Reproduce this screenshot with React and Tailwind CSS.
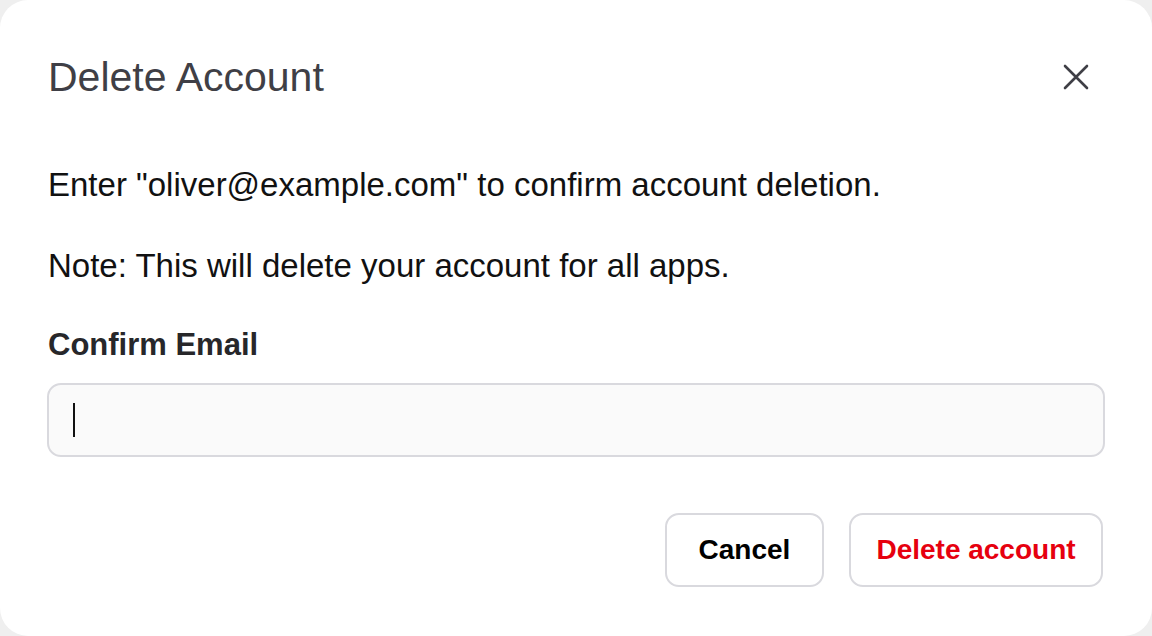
export default function App() {
  return (
    <div className="w-[1152px] h-[636px] bg-[#efefef] overflow-hidden" style={{ fontFamily: '"Liberation Sans", Arial, sans-serif' }}>
      <div className="w-full h-full bg-white rounded-[28px] flex flex-col pl-[47px] pr-[47px] pt-[53px]">
        <div className="flex items-center justify-between h-[48px]">
          <h1 className="pl-[1px] text-[41px] leading-none text-[#3f3f46]">Delete Account</h1>
          <button className="w-[48px] h-[48px] flex items-center justify-center mr-[5px] text-[#3f3f46]" aria-label="Close">
            <svg width="26" height="26" viewBox="0 0 26 26" fill="none" stroke="currentColor" strokeWidth="2.6" strokeLinecap="round">
              <path d="M2 2L24 24M24 2L2 24" />
            </svg>
          </button>
        </div>
        <p className="mt-[65px] pl-[1px] text-[33px] leading-[38px] text-[#111111]">Enter "oliver@example.com" to confirm account deletion.</p>
        <p className="mt-[43px] pl-[1px] text-[33px] leading-[38px] text-[#111111]">Note: This will delete your account for all apps.</p>
        <label className="mt-[41px] pl-[1px] text-[31px] leading-[38px] font-bold text-[#27272a]">Confirm Email</label>
        <div className="mt-[19px] h-[74px] rounded-[14px] border-2 border-[#d9d9de] bg-[#fafafa] flex items-center pl-[24px]">
          <div className="w-[2px] h-[34px] bg-[#111111]" />
        </div>
        <div className="mt-[56px] flex justify-end gap-[25px] pr-[2px]">
          <button className="w-[159px] h-[74px] rounded-[14px] border-2 border-[#d9d9de] bg-white text-[28px] font-bold text-black">Cancel</button>
          <button className="w-[254px] h-[74px] rounded-[14px] border-2 border-[#d9d9de] bg-white text-[28px] font-bold text-[#e6000f]">Delete account</button>
        </div>
      </div>
    </div>
  );
}
